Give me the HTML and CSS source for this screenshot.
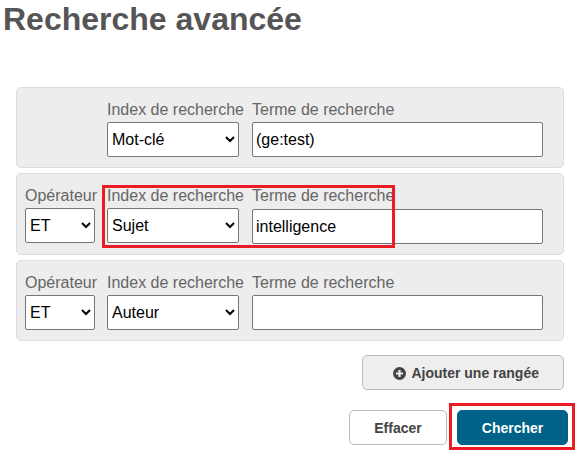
FILE: index.html
```html
<!DOCTYPE html>
<html>

<head>
    <meta charset="UTF-8">
    <title>Recherche avancée</title>
    <link rel="stylesheet" href="styles.css">
</head>

<body>
    <h1>Recherche avancée</h1>

    <form>
        <div class="rangee">
            <div class="champ col-op"></div>
            <div class="champ col-index">
                <label>Index de recherche</label>
                <select>
                    <option>Mot-clé</option>
                </select>
            </div>
            <div class="champ col-terme">
                <label>Terme de recherche</label>
                <input type="text" value="(ge:test)">
            </div>
        </div>

        <div class="rangee">
            <div class="champ col-op">
                <label>Opérateur</label>
                <select>
                    <option>ET</option>
                </select>
            </div>
            <div class="champ col-index">
                <label>Index de recherche</label>
                <select>
                    <option>Sujet</option>
                </select>
            </div>
            <div class="champ col-terme">
                <label>Terme de recherche</label>
                <input type="text" value="intelligence">
            </div>
        </div>

        <div class="rangee">
            <div class="champ col-op">
                <label>Opérateur</label>
                <select>
                    <option>ET</option>
                </select>
            </div>
            <div class="champ col-index">
                <label>Index de recherche</label>
                <select>
                    <option>Auteur</option>
                </select>
            </div>
            <div class="champ col-terme">
                <label>Terme de recherche</label>
                <input type="text">
            </div>
        </div>

        <div class="ajout">
            <button type="button" class="btn btn-ajout">
                <svg width="13" height="13" viewBox="0 0 13 13">
                    <circle cx="6.5" cy="6.5" r="6.5" fill="#444"/>
                    <path d="M6.5 3v7M3 6.5h7" stroke="#eee" stroke-width="2.2"/>
                </svg>
                Ajouter une rangée
            </button>
        </div>

        <div class="actions">
            <button type="button" class="btn btn-effacer">Effacer</button>
            <button type="button" class="btn btn-chercher">Chercher</button>
        </div>
    </form>

    <div class="annot annot-champs"></div>
    <div class="annot annot-chercher"></div>
</body>

</html>
```

FILE: styles.css
```css
html,
body {
    height: 100%;
}

body {
    font-family: "Liberation Sans", Arial, sans-serif;
    margin: 0;
    padding: 0;
    background-color: #fff;
    position: relative;
    overflow: hidden;
}

h1 {
    margin: 0;
    padding: 1px 0 0 3px;
    height: 87px;
    box-sizing: border-box;
    font-size: 32px;
    line-height: 37px;
    color: #555;
}

form {
    width: 548px;
    margin-left: 16px;
}

.rangee {
    display: flex;
    height: 81px;
    box-sizing: border-box;
    margin-bottom: 5px;
    padding: 12px 0 0 8px;
    background-color: #ededed;
    border: 1px solid #ddd;
    border-radius: 5px;
}

.rangee:nth-child(2) {
    height: 82px;
}

.rangee:nth-child(2) input {
    margin-top: 1px;
}

.champ label {
    display: block;
    height: 22px;
    font-size: 16px;
    line-height: 19px;
    color: #666;
    white-space: nowrap;
}

.col-op {
    width: 70px;
    margin-right: 12px;
}

.col-index {
    width: 132px;
    margin-right: 13px;
}

.col-terme {
    width: 291px;
}

select,
input {
    display: block;
    width: 100%;
    height: 35px;
    box-sizing: border-box;
    font-family: "Liberation Sans", Arial, sans-serif;
    font-size: 16px;
    color: #000;
    background-color: #fff;
    border: 1px solid #767676;
    border-radius: 2px;
}

input {
    padding: 0 3px;
}

.ajout {
    display: flex;
    justify-content: flex-end;
    margin-top: 14px;
}

.actions {
    display: flex;
    justify-content: flex-end;
    gap: 10px;
    margin-top: 20px;
    margin-right: -4px;
}

.btn {
    height: 35px;
    box-sizing: border-box;
    font-family: "Liberation Sans", Arial, sans-serif;
    font-size: 14px;
    font-weight: bold;
    border-radius: 5px;
    cursor: pointer;
}

.btn-ajout {
    width: 202px;
    padding-left: 12px;
    color: #444;
    background-color: #eee;
    border: 1px solid #bbb;
}

.btn-ajout svg {
    margin-right: 2px;
    vertical-align: -2px;
}

.btn-effacer {
    width: 98px;
    color: #444;
    background-color: #fff;
    border: 1px solid #bbb;
}

.btn-chercher {
    width: 111px;
    color: #fff;
    background-color: #006288;
    border: 1px solid #006288;
}

/* encadres rouges par dessus la capture */
.annot {
    position: absolute;
    box-sizing: border-box;
    border: 3px solid #ed1c24;
}

.annot-champs {
    left: 102px;
    top: 185px;
    width: 293px;
    height: 63px;
}

.annot-chercher {
    left: 449px;
    top: 403px;
    width: 126px;
    height: 47px;
}
```
